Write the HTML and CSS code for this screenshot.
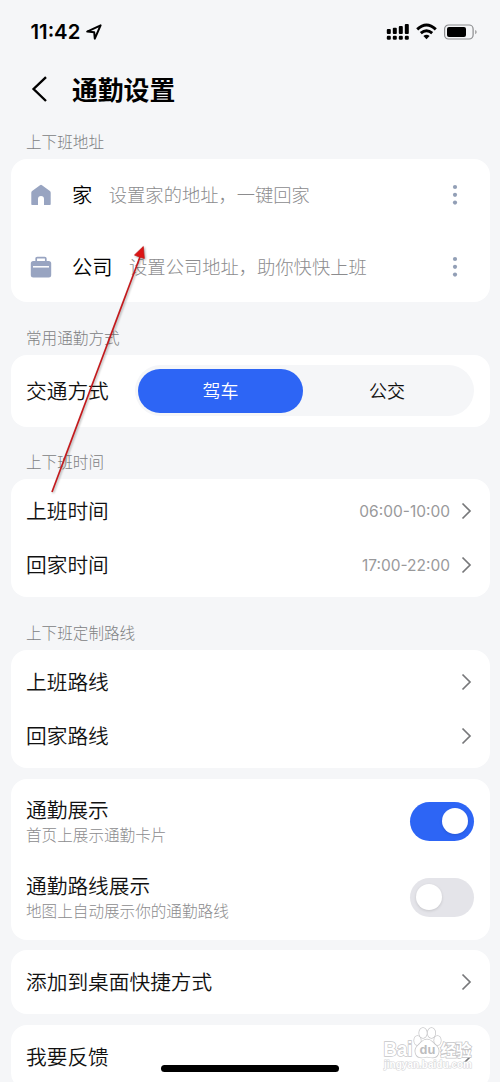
FILE: index.html
```html
<!DOCTYPE html>
<html lang="zh-CN">
<head>
<meta charset="utf-8">
<title>通勤设置</title>
<link rel="stylesheet" href="styles.css">
</head>
<body>
<div class="screen">
  <header class="status">
    <span class="clock">11:42</span>
    <svg class="locate" width="16" height="16" viewBox="0 0 16 16"><path d="M1.200 7.600 14.600 1.400 8.800 14.600 8.200 8.300Z" fill="none" stroke="#000" stroke-width="2" stroke-linejoin="round"/></svg>
    <svg class="status-icons" width="92" height="18" viewBox="0 0 92 18">
      <g fill="#000">
        <rect x="0.8" y="5.9" width="4" height="5" rx="1"/><rect x="6.8" y="4.8" width="4" height="6.1" rx="1"/><rect x="12.8" y="2.9" width="4" height="8" rx="1"/><rect x="18.8" y="1" width="4" height="9.9" rx="1"/>
        <rect x="0.8" y="12.7" width="4" height="4" rx="1.3"/><rect x="6.8" y="12.7" width="4" height="4" rx="1.3"/><rect x="12.8" y="12.7" width="4" height="4" rx="1.3"/><rect x="18.8" y="12.7" width="4" height="4" rx="1.3"/>
        <path d="M40.500 16.200 37.400 13.100Q40.500 10.400 43.600 13.100Z"/>
        <rect x="61" y="4" width="19" height="10" rx="2"/>
        <path d="M89.300 7v4.200q1.300-.6 1.300-2.100T89.300 7Z" fill="#888"/>
      </g>
      <path d="M31.200 6.400Q40.500-2.300 49.800 6.400M34.800 10.200Q40.500 5.200 46.200 10.200" fill="none" stroke="#000" stroke-width="2.900"/>
      <rect x="58.600" y="2" width="28.500" height="14" rx="4" fill="none" stroke="#8b8c8e" stroke-width="1.200"/>
    </svg>
  </header>
  <nav class="titlebar">
    <svg width="18" height="28" viewBox="0 0 18 28"><path d="M15 2.2 2.6 14 15 26" fill="none" stroke="#000" stroke-width="2.4"/></svg>
    <h1>通勤设置</h1>
  </nav>

  <h2 class="label label-first">上下班地址</h2>
  <section class="card">
    <div class="place">
      <svg class="place-icon" width="22" height="22" viewBox="0 0 22 22"><path d="M1.300 20.200V8.700q0-1 .8-1.600L10 1.200q1-.7 2 0l7.900 5.900q.8.6.8 1.600v11.500q0 .8-.8.8H14v-6q0-3-3-3t-3 3v6H2.100q-.8 0-.8-.8Z" fill="#98a4c1"/></svg>
      <span class="place-name">家</span><span class="hint">设置家的地址，一键回家</span>
      <svg class="more" width="6" height="22" viewBox="0 0 6 22"><g fill="#929fb6"><circle cx="3" cy="3" r="2.1"/><circle cx="3" cy="10.800" r="2.1"/><circle cx="3" cy="18.600" r="2.1"/></g></svg>
    </div>
    <div class="place">
      <svg class="place-icon" width="22" height="22" viewBox="0 0 22 22"><path d="M6.200 6V2.600q0-1 1-1h7.600q1 0 1 1V6" fill="none" stroke="#98a4c1" stroke-width="1.700"/><rect x=".8" y="5" width="20.400" height="16.500" rx="2.500" fill="#98a4c1"/><path d="M3 10.800h16" stroke="#fff" stroke-width="1.500"/></svg>
      <span class="place-name">公司</span><span class="hint">设置公司地址，助你快快上班</span>
      <svg class="more" width="6" height="22" viewBox="0 0 6 22"><g fill="#929fb6"><circle cx="3" cy="3" r="2.1"/><circle cx="3" cy="10.800" r="2.1"/><circle cx="3" cy="18.600" r="2.1"/></g></svg>
    </div>
  </section>

  <h2 class="label">常用通勤方式</h2>
  <section class="card mode">
    <span class="name">交通方式</span>
    <div class="tabs"><span class="tab active">驾车</span><span class="tab">公交</span></div>
  </section>

  <h2 class="label">上下班时间</h2>
  <section class="card list">
    <div class="row"><span class="name">上班时间</span><span class="time">06:00-10:00</span><svg class="chev" width="11" height="18" viewBox="0 0 11 18"><path d="M1.500 1.500 9 9l-7.500 7.500"/></svg></div>
    <div class="row"><span class="name">回家时间</span><span class="time">17:00-22:00</span><svg class="chev" width="11" height="18" viewBox="0 0 11 18"><path d="M1.500 1.500 9 9l-7.500 7.500"/></svg></div>
  </section>

  <h2 class="label">上下班定制路线</h2>
  <section class="card list">
    <div class="row"><span class="name">上班路线</span><svg class="chev" width="11" height="18" viewBox="0 0 11 18"><path d="M1.500 1.500 9 9l-7.500 7.500"/></svg></div>
    <div class="row"><span class="name">回家路线</span><svg class="chev" width="11" height="18" viewBox="0 0 11 18"><path d="M1.500 1.500 9 9l-7.500 7.500"/></svg></div>
  </section>

  <section class="card switches">
    <div class="setting"><div class="caption"><p>通勤展示</p><small>首页上展示通勤卡片</small></div><span class="switch on"></span></div>
    <div class="setting"><div class="caption"><p>通勤路线展示</p><small>地图上自动展示你的通勤路线</small></div><span class="switch"></span></div>
  </section>

  <section class="card single"><span class="name">添加到桌面快捷方式</span><svg class="chev" width="11" height="18" viewBox="0 0 11 18"><path d="M1.500 1.500 9 9l-7.500 7.500"/></svg></section>
  <section class="card single"><span class="name">我要反馈</span><svg class="chev" width="11" height="18" viewBox="0 0 11 18"><path d="M9 9l-7.500 7.500"/></svg></section>

  <svg class="watermark" width="100" height="48" viewBox="0 0 100 48">
    <g class="mark-ink">
      <text x="3.500" y="31" font-size="20" font-weight="700" textLength="29" lengthAdjust="spacingAndGlyphs">Bai</text>
      <text x="60.500" y="30.500" font-size="16" font-weight="700" textLength="31">经验</text>
      <ellipse cx="37.500" cy="15.500" rx="3.300" ry="4.500"/><ellipse cx="43" cy="8" rx="3.800" ry="5"/><ellipse cx="51.500" cy="8" rx="3.800" ry="5"/><ellipse cx="57.500" cy="15.500" rx="3.300" ry="4.500"/>
      <path d="M47 14.500c4 0 5.500 3 9 6 5 4.500 2.500 12-3.500 12-3 0-3-.8-5.500-.8s-2.500.8-5.500.8c-6 0-8.500-7.500-3.500-12 3.500-3 5-6 9-6Z"/>
    </g>
    <text class="mark-url" x="4" y="43" font-size="10.500" font-weight="700" textLength="88" lengthAdjust="spacingAndGlyphs">jingyan.baidu.com</text>
    <text class="mark-du" x="39.500" y="29" font-size="13">du</text>
  </svg>
  <svg class="arrow" width="110" height="256" viewBox="0 0 110 256">
    <path d="M12 249 100 14" stroke="#c41a1d" stroke-width="1.700"/>
    <path d="M103.300 3.500 104.300 15.500 99 13.800 94.500 12Z" fill="#dc1414" stroke="#c01a1a" stroke-width=".8"/>
  </svg>
  <div class="home-bar"></div>
</div>
</body>
</html>
```
FILE: styles.css
```css
* { box-sizing: border-box; }
body { margin: 0; }
h1, h2, p { margin: 0; font-weight: 400; }
.screen {
  position: relative;
  width: 500px;
  height: 1082px;
  overflow: hidden;
  background: #f5f6f8;
  color: #111;
  font-family: "Noto Sans CJK SC", sans-serif;
  font-size: 20.7px;
  font-weight: 350;
  line-height: 30px;
  white-space: nowrap;
}
.setting p { font-weight: 350; }
.status { display: flex; align-items: center; height: 64px; padding: 0 22px 0 30.500px; }
.clock { font: 600 20.300px/24px Inter, sans-serif; width: 51px; color: #000; }
.locate { margin-left: 4px; }
.status-icons { margin-left: auto; }
.titlebar { display: flex; align-items: center; gap: 23px; height: 50px; padding-left: 31px; color: #000; }
.titlebar h1 { padding-bottom: 1px; font-size: 25.8px; font-weight: 700; line-height: 38px; }
.label { height: 52.500px; padding: 22.500px 26px 0; font-size: 15.600px; font-weight: 300; line-height: 24px; color: #808183; }
.label-first { height: 45px; padding-top: 15px; }
.card { margin: 0 10.500px; background: #fff; border-radius: 16px; }
.name, .place-name, .hint { padding-bottom: 2px; }
.place { display: flex; align-items: center; height: 71.700px; padding: 0 32px 0 19px; }
.place-icon { margin-right: 20.500px; }
.place-name { margin-right: 16.500px; font-size: 20.300px; color: #000; }
.hint { font-size: 18.300px; font-weight: 300; color: #8c8c8e; }
.more { margin-left: auto; }
.mode { display: flex; align-items: center; justify-content: space-between; height: 72px; padding: 0 15.500px; }
.tabs { display: flex; align-items: center; width: 339px; height: 51px; padding: 4px 3px; border-radius: 26px; background: #f5f6f8; }
.tab { flex: 1; height: 43.500px; border-radius: 22px; text-align: center; font-size: 18px; line-height: 43px; }
.active { flex: none; width: 165px; background: #2d65f5; color: #fff; }
.list { height: 118px; padding: 5px 15.500px; }
.row { display: flex; align-items: center; justify-content: space-between; height: 54px; }
.time { margin-left: auto; margin-right: 11px; padding-top: 2px; font-family: Inter, sans-serif; font-size: 15.500px; font-weight: 400; color: #99999b; }
.chev { margin-right: 2px; fill: none; stroke: #77787a; stroke-width: 1.700; }
.switches { height: 161px; margin-top: 11px; padding: 4.500px 15.500px; }
.setting { display: flex; align-items: center; justify-content: space-between; height: 76px; }
.caption { padding-bottom: 3px; }
.setting small { display: block; font-size: 15.600px; font-weight: 300; line-height: 21px; color: #8c8c8e; }
.switch { width: 64px; height: 38.500px; padding: 6px; border-radius: 20px; background: #e4e4e9; }
.switch::before { content: ""; display: block; width: 26px; height: 26px; border-radius: 50%; background: #fff; box-shadow: 0 1px 3px #0002; }
.on { background: #2d65f5; }
.on::before { margin-left: auto; }
.single { display: flex; align-items: center; justify-content: space-between; height: 64px; margin-top: 10.500px; padding: 0 15.500px; }
.watermark { position: absolute; left: 380px; top: 1025px; font-family: "Liberation Sans", "Noto Sans CJK SC", sans-serif; }
.mark-ink { fill: #fff; stroke: #c6c6c8; stroke-width: 1.500; paint-order: stroke; }
.mark-url { fill: #fff; stroke: #d6d6d8; stroke-width: 1.200; paint-order: stroke; }
.mark-du { fill: #bcbcbe; font-weight: 700; }
.arrow { position: absolute; left: 40px; top: 243px; filter: drop-shadow(1px 1px 1px #0005); }
.home-bar { position: absolute; left: 161px; top: 1065px; width: 178px; height: 7px; border-radius: 4px; background: #000; }
```
